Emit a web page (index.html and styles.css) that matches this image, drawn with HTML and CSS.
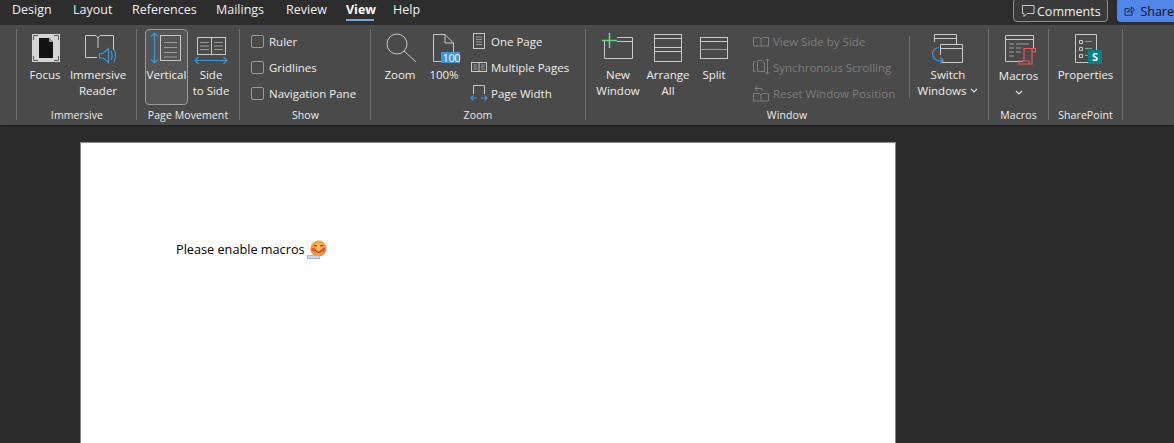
FILE: index.html
```html
<!DOCTYPE html>
<html lang="en">
<head>
<meta charset="utf-8">
<title>Word - View</title>
<link rel="stylesheet" href="styles.css">
</head>
<body>
<header class="tabbar">
  <nav class="tabs">
    <span class="tab t-design">Design</span>
    <span class="tab t-layout">Layout</span>
    <span class="tab t-refs">References</span>
    <span class="tab t-mail">Mailings</span>
    <span class="tab t-review">Review</span>
    <span class="tab t-view active">View</span>
    <span class="tab t-help">Help</span>
  </nav>
  <div class="actions">
    <button class="comments">
      <svg width="14" height="14" viewBox="0 0 14 14"><path class="ln" d="M1.5 1.5H13V9.5H6L3 12.5V9.5H1.5Z"/></svg>
      <span>Comments</span>
    </button>
    <button class="share">
      <svg width="16" height="14" viewBox="0 0 16 14"><path class="dk" d="M7 3.5H1.5V13H11.5V9M5 9C5.5 5.5 8 4.5 10.5 4.5V1.5L15 5.5L10.5 9.5V6.8C8 6.8 6.5 7.5 5 9Z"/></svg>
      <span>Share</span>
    </button>
  </div>
</header>

<section class="ribbon">
  <div class="group g-immersive">
    <div class="controls">
      <div class="big w46">
        <svg class="ic" viewBox="0 0 40 32"><rect x="7" y="1" width="28" height="28" fill="#d4d4d4"/><path d="M14 5H24L28 9V25H14Z" fill="#111"/><path d="M24 5V9H28Z" fill="#9a9a9a"/><path d="M8.5 7V2.5H13M29 2.5H33.5V7M33.5 23V27.5H29M13 27.5H8.5V23" fill="none" stroke="#5a5a5a"/></svg>
        <span>Focus</span>
      </div>
      <div class="big w60">
        <svg class="ic" viewBox="0 0 40 32"><path class="ln" d="M7.5 2.5H18L20 5L22 2.5H35.5V17M7.5 2.5V24.5H19M20 5V15"/><path class="bl" d="M21.5 20.5H25L30.5 15.5V29.5L25 25H21.5Z"/><path class="bl" d="M33 18C34.5 21 34.5 24 33 27M36 16C38 20.5 38 24.5 36 29"/></svg>
        <span>Immersive<br>Reader</span>
      </div>
    </div>
    <div class="glabel">Immersive</div>
  </div>

  <div class="group g-pages">
    <div class="controls">
      <div class="big w43 selected">
        <svg class="ic" viewBox="0 0 40 32"><path class="bl" d="M7.5 0V30M4 3.5L7.5 0L11 3.5M4 26.5L7.5 30L11 26.5"/><rect class="ln" x="13.5" y="2.5" width="20" height="25"/><path class="ln dim" d="M17 9.5H30M17 14.5H30M17 19.5H30M17 24H30"/></svg>
        <span>Vertical</span>
      </div>
      <div class="big w46">
        <svg class="ic" viewBox="0 0 40 32"><rect class="ln" x="6.5" y="4.5" width="28" height="17"/><path class="ln" d="M20.5 4.5V21.5"/><path class="ln dim" d="M9 9.5H18M9 13H18M9 16.5H18M23 9.5H32M23 13H32M23 16.5H32"/><path class="bl" d="M4 27.5H36M7.5 24L4 27.5L7.5 31M32.5 24L36 27.5L32.5 31"/></svg>
        <span>Side<br>to Side</span>
      </div>
    </div>
    <div class="glabel">Page Movement</div>
  </div>

  <div class="group g-show">
    <div class="controls">
      <div class="small-list">
        <label class="check"><i class="box"></i>Ruler</label>
        <label class="check"><i class="box"></i>Gridlines</label>
        <label class="check"><i class="box"></i>Navigation Pane</label>
      </div>
    </div>
    <div class="glabel">Show</div>
  </div>

  <div class="group g-zoom">
    <div class="controls">
      <div class="big w42">
        <svg class="ic" viewBox="0 0 40 32"><circle class="ln" cx="17" cy="11" r="10"/><path class="ln" d="M24 18L36 29"/></svg>
        <span>Zoom</span>
      </div>
      <div class="big w46">
        <svg class="ic" viewBox="0 0 40 32"><path class="ln" d="M9.5 28.5V1.5H21L29.5 10V19M21 1.5V10H29.5M9.5 28.5H17"/><rect x="17" y="19" width="19" height="11" fill="#3a96dd"/><text class="badge" x="18.5" y="28.5">100</text></svg>
        <span>100%</span>
      </div>
      <div class="small-list zoom-list">
        <div class="small"><svg class="sic" viewBox="0 0 18 20"><rect class="ln" x="3.5" y="2.5" width="11" height="15"/><path class="ln dim" d="M6 6H12M6 8.5H12M6 11H12M6 13.5H12"/></svg><span>One Page</span></div>
        <div class="small"><svg class="sic" viewBox="0 0 18 20"><rect class="ln" x="1.5" y="5.5" width="15" height="9"/><path class="ln" d="M9 5.5V14.5"/><path class="ln dim" d="M3.5 8H7M3.5 10H7M3.5 12H7M11 8H14.5M11 10H14.5M11 12H14.5"/></svg><span>Multiple Pages</span></div>
        <div class="small"><svg class="sic" viewBox="0 0 18 20"><path class="ln" d="M3.5 11V2.5H14.5V11"/><path class="bl" d="M1 15H7M11 15H17M3.5 12.5L1 15L3.5 17.5M14.5 12.5L17 15L14.5 17.5"/></svg><span>Page Width</span></div>
      </div>
    </div>
    <div class="glabel">Zoom</div>
  </div>

  <div class="group g-window">
    <div class="controls">
      <div class="big w48">
        <svg class="ic" viewBox="0 0 40 32"><path class="ln" d="M6.5 7V25.5H34.5V4.5H19M19 8.5H34.5"/><path class="gr" d="M4 7.5H19M11.5 0V15"/></svg>
        <span>New<br>Window</span>
      </div>
      <div class="big w52">
        <svg class="ic" viewBox="0 0 40 32"><rect class="ln" x="6.5" y="1.5" width="27" height="27"/><path class="ln" d="M6.5 5.5H33.5M6.5 14.5H33.5M6.5 18.5H33.5"/></svg>
        <span>Arrange<br>All</span>
      </div>
      <div class="big w40">
        <svg class="ic" viewBox="0 0 40 32"><rect class="ln" x="6.5" y="4.5" width="27" height="21"/><path class="ln" d="M6.5 8.5H33.5"/><path class="ln dim" d="M6.5 16.5H33.5"/></svg>
        <span>Split</span>
      </div>
      <div class="small-list window-list">
        <div class="small off"><svg class="sic" viewBox="0 0 18 20"><path class="off-ln" d="M1.5 15V6.5H7.5L9 8L10.5 6.5H16.5V15H1.5ZM9 8V15"/></svg><span>View Side by Side</span></div>
        <div class="small off"><svg class="sic" viewBox="0 0 18 20"><path class="off-ln" d="M3.5 4.5H1.5V14.5H3.5M5.5 14.5V3.5H10L12.5 6V14.5ZM15.5 2V17M13.5 4L15.5 2L17.5 4M13.5 15L15.5 17L17.5 15"/></svg><span>Synchronous Scrolling</span></div>
        <div class="small off"><svg class="sic" viewBox="0 0 18 20"><path class="off-ln" d="M1.5 18V10.5H7.5L9 12L10.5 10.5H16.5V18ZM9 12V18M3 5.5H10V8M3 5.5L5.5 3M3 5.5L5.5 8"/></svg><span>Reset Window Position</span></div>
      </div>
      <div class="inner-sep"></div>
      <div class="big w60 switch">
        <svg class="ic" viewBox="0 0 40 32"><path class="ln" d="M6.5 9V1.5H28.5V11M6.5 5.5H28.5"/><path class="ln" d="M12.5 11.5H34.5V29.5H14M12.5 11.5V22M12.5 15.5H34.5"/><path class="bl" d="M11 14.5C6 15 3.5 19 5 23C6 26.5 10 28.5 15 27.5M12 24.5L15.5 27.5L12 30.5"/></svg>
        <span>Switch<br>Windows<svg class="chev" viewBox="0 0 8 5"><path d="M1 1L4 4L7 1"/></svg></span>
      </div>
    </div>
    <div class="glabel window-label">Window</div>
  </div>

  <div class="group g-macros">
    <div class="controls">
      <div class="big w59 macros">
        <svg class="ic" viewBox="0 0 40 32"><path class="ln" d="M24 28.5H6.5V2.5H34.5V15M6.5 6.5H34.5"/><path class="ln dim" d="M10 11H15M17 11H30M10 15H15M17 15H22M10 19H15M17 19H22M10 23H15"/><path class="rd" d="M25 28V15.5H36.5V19H33M33 15.5V31H20V28H30V31"/></svg>
        <span>Macros<br><svg class="chev alone" viewBox="0 0 8 5"><path d="M1 1L4 4L7 1"/></svg></span>
      </div>
    </div>
    <div class="glabel">Macros</div>
  </div>

  <div class="group g-share">
    <div class="controls">
      <div class="big w73">
        <svg class="ic" viewBox="0 0 40 32"><path class="ln" d="M9.5 1.5H30.5V17M9.5 1.5V29.5H22"/><path class="ln" d="M13.5 7.5H16.5V10.5H13.5ZM13.5 14.5H16.5V17.5H13.5ZM13.5 21.5H16.5V24.5H13.5Z"/><path class="ln dim" d="M19 8.5H26M19 15.5H26M19 22.5H22"/><rect x="22" y="17" width="14" height="14" fill="#038387"/><text class="s" x="26" y="28">S</text></svg>
        <span>Properties</span>
      </div>
    </div>
    <div class="glabel">SharePoint</div>
  </div>
</section>

<main class="workspace">
  <article class="page">
    <p class="para">Please enable macros
      <span class="emoji-wrap">
        <svg class="emoji" viewBox="0 0 18 18"><defs><radialGradient id="face" cx="50%" cy="40%" r="60%"><stop offset="0" stop-color="#fdc34a"/><stop offset="1" stop-color="#f08a24"/></radialGradient></defs><circle cx="9" cy="9" r="8.5" fill="url(#face)"/><circle cx="3.6" cy="10.2" r="2" fill="#ee4f4f"/><circle cx="14.4" cy="10.2" r="2" fill="#ee4f4f"/><path d="M4.5 6.6C5.2 5.5 6.4 5.5 7 6.6M11 6.6C11.6 5.5 12.8 5.5 13.5 6.6M5.5 10.5C7 14 11 14 12.5 10.5" fill="none" stroke="#5a3210" stroke-width="1.1"/></svg>
        <i class="autocorrect"></i>
      </span>
    </p>
  </article>
</main>
</body>
</html>
```
FILE: styles.css
```css
* { box-sizing: border-box; }
html, body { margin: 0; height: 100%; }
body {
  width: 1174px;
  height: 443px;
  overflow: hidden;
  background: #2b2b2b;
  font-family: "Open Sans", "Noto Sans", sans-serif;
  font-size: 11.5px;
  color: #eeeeee;
}

/* top tab bar */
.tabbar {
  height: 25px;
  background: #2d2d2d;
  display: flex;
  justify-content: space-between;
  position: relative;
}
.tabs { display: flex; padding-left: 12px; }
.tab { font-size: 12.5px; line-height: 20px; height: 21px; color: #f0f0f0; }
.t-design { width: 61px; }
.t-layout { width: 59px; }
.t-refs { width: 84px; }
.t-mail { width: 70px; }
.t-review { width: 60px; }
.t-view { width: 47px; }
.tab.active { font-weight: 700; color: #fff; position: relative; }
.tab.active::after {
  content: "";
  position: absolute;
  left: 0;
  top: 19px;
  width: 28px;
  height: 2px;
  background: #7ba7e8;
}
.actions { display: flex; gap: 9px; align-items: flex-start; margin-top: -2px; }
.comments, .share {
  height: 24px;
  font: inherit;
  font-size: 12.5px;
  display: flex;
  align-items: center;
  gap: 2px;
  padding: 2px 0 0 7px;
}
.comments {
  width: 95px;
  background: #3a3a3a;
  border: 1px solid #8c8c8c;
  border-radius: 4px;
  color: #f0f0f0;
}
.share {
  width: 57px;
  background: #4f86e8;
  border: 0;
  border-radius: 4px 0 0 4px;
  color: #111;
  gap: 5px;
  padding-left: 7px;
}

/* ribbon */
.ribbon {
  height: 100px;
  background: #4a4a4a;
  padding: 4px 0 0 16px;
  display: flex;
  align-items: flex-start;
  box-shadow: 0 1px 2px #1f1f1f;
}
.group {
  height: 91px;
  border-right: 1px solid #6e6e6e;
  display: flex;
  flex-direction: column;
  flex: none;
}
.g-immersive { width: 121px; border-left: 1px solid #6e6e6e; padding-left: 5px; }
.g-pages { width: 103px; padding-left: 8px; }
.g-show { width: 131px; padding-left: 11px; }
.g-zoom { width: 215px; padding-left: 8px; }
.g-window { width: 403px; padding-left: 8px; }
.g-macros { width: 60px; }
.g-share { width: 74px; }
.controls { display: flex; height: 80px; flex: none; }
.glabel {
  text-align: center;
  font-size: 10.5px;
  line-height: 12px;
  color: #eaeaea;
  letter-spacing: 0.1px;
}
.g-immersive .glabel { margin-left: -4px; }
.g-pages .glabel { margin-left: -8px; }
.g-show .glabel { margin-left: -10px; }
.g-zoom .glabel { margin-left: -8px; }
.window-label { width: 386px; }

.big {
  flex: none;
  height: 76px;
  padding-top: 4px;
  display: flex;
  flex-direction: column;
  align-items: center;
  text-align: center;
  line-height: 16px;
  white-space: nowrap;
}
.big span { display: block; margin-top: 2px; }
.w40 { width: 40px; }
.w42 { width: 42px; }
.w43 { width: 43px; }
.w46 { width: 46px; }
.w48 { width: 48px; }
.w52 { width: 52px; }
.w59 { width: 59px; }
.w60 { width: 60px; }
.w73 { width: 73px; }
.selected {
  border: 1px solid #9b9b9b;
  border-radius: 4px;
  background: #565656;
  padding-top: 3px;
}
.ic { width: 40px; height: 32px; flex: none; overflow: visible; }
.macros span { margin-top: 3px; }

.ln { fill: none; stroke: #c9c9c9; stroke-width: 1; }
.dim { stroke: #9a9a9a; }
.bl { fill: none; stroke: #3a96dd; stroke-width: 1.2; }
.gr { fill: none; stroke: #6fcf8d; stroke-width: 1.6; }
.rd { fill: none; stroke: #e9585a; stroke-width: 1.2; }
.dk { fill: none; stroke: #111; stroke-width: 1; }
.off-ln { fill: none; stroke: #7d7d7d; stroke-width: 1; }
.badge { font-size: 11px; fill: #fff; font-family: "Open Sans", sans-serif; letter-spacing: -0.4px; }
.s { font-size: 11px; font-weight: 700; fill: #fff; font-family: "Open Sans", sans-serif; }
.chev { width: 8px; height: 5px; margin-left: 4px; vertical-align: 2px; }
.chev.alone { margin-left: 0; vertical-align: 1px; }
.chev path { fill: none; stroke: #e6e6e6; stroke-width: 1.1; }

/* small stacks */
.small-list { display: flex; flex-direction: column; gap: 2px; flex: none; }
.small, .check { display: flex; align-items: center; height: 24px; white-space: nowrap; }
.sic { width: 18px; height: 20px; flex: none; margin-right: 3px; }
.box {
  width: 13px;
  height: 13px;
  border: 1px solid #9b9b9b;
  border-radius: 2px;
  margin-right: 5px;
  flex: none;
}
.zoom-list { margin-left: 3px; }
.window-list { margin-left: 18px; width: 157px; }
.off { color: #7d7d7d; }
.inner-sep { width: 1px; height: 62px; margin-top: 7px; background: #6e6e6e; flex: none; }
.switch { margin-left: 8px; }

/* document */
.workspace { padding: 17px 0 0 80px; }
.page {
  width: 816px;
  height: 301px;
  background: #fff;
  border: 1px solid #8a8a8a;
  border-bottom: 0;
  padding: 97px 0 0 95px;
}
.para {
  margin: 0;
  font-size: 12.7px;
  line-height: 18px;
  color: #000;
  display: flex;
  align-items: center;
  gap: 3px;
}
.emoji-wrap { position: relative; display: block; width: 19px; height: 18px; }
.emoji { position: absolute; left: 2px; top: 0; width: 17px; height: 17px; }
.autocorrect {
  position: absolute;
  left: -1px;
  top: 15px;
  width: 13px;
  height: 4px;
  background: #c9d9ef;
  border: 1px solid #9db8de;
}
```
